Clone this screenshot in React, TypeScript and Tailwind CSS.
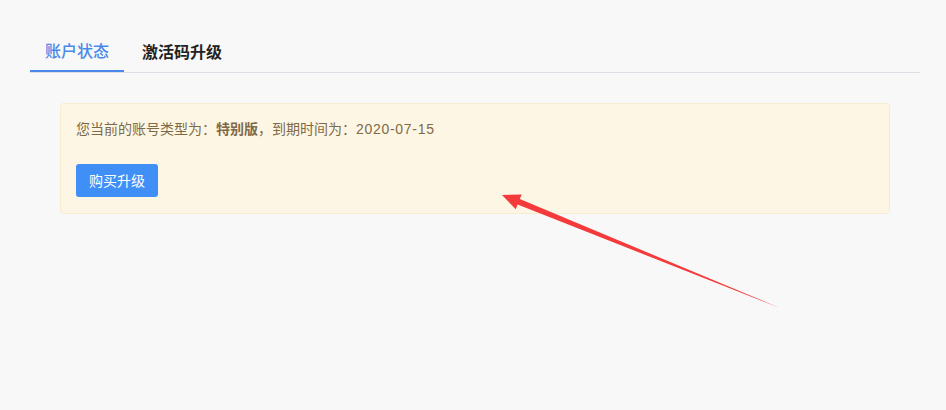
import React from 'react';

const font = { fontFamily: '"Liberation Sans", "Noto Sans CJK SC", sans-serif' };

export default function App() {
    return (
        <div className="relative w-[946px] h-[410px] bg-[#f8f8f8] overflow-hidden" style={font}>
            <div className="pt-[33px] px-[30px] mr-[-4px]">
                {/* tabs */}
                <div className="flex border-b border-[#dcdfe6] w-[890px]">
                    <div className="w-[94px] h-[39px] flex items-center justify-center text-base font-medium text-[#4a88ea] border-b-2 border-[#4a88ea] -mb-px">
                        账户状态
                    </div>
                    <div className="h-[39px] flex items-center pl-[18px] text-base font-bold text-[#222]">
                        激活码升级
                    </div>
                </div>

                {/* status panel */}
                <div className="ml-[30px] mt-[30px] w-[830px] h-[111px] bg-[#fdf6e4] border border-[#f6ecd0] rounded px-[15px] pt-[15px]">
                    <p className="text-sm text-[#7f6a48] leading-5">
                        您当前的账号类型为：<span className="font-bold">特别版</span>，到期时间为：<span className="tracking-[0.7px]">2020-07-15</span>
                    </p>
                    <button className="mt-[25px] w-[82px] h-[33px] rounded-[3px] bg-[#3f8ff7] text-white text-sm">
                        购买升级
                    </button>
                </div>
            </div>

            {/* annotation arrow */}
            <svg className="absolute left-0 top-0" width="946" height="410" viewBox="0 0 946 410">
                <polygon
                    points="502,195 521.7,194.4 519.8,199 780,308 517.6,204.6 515.7,209.2"
                    fill="#f43a3a"
                />
            </svg>
        </div>
    );
}
